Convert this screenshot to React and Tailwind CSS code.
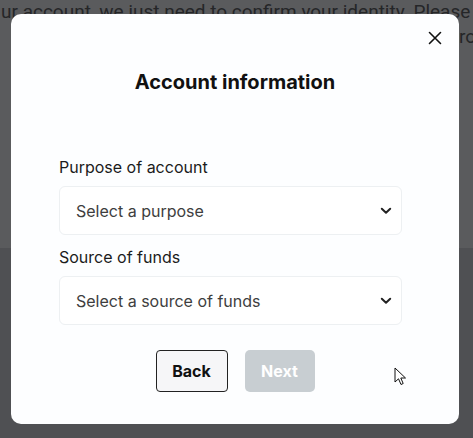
import React from "react";

function Chevron() {
  return (
    <svg width="12" height="8" viewBox="0 0 12 8" fill="none" className="shrink-0">
      <path d="M1.8 1.8 L6 5.8 L10.2 1.8" stroke="#222" strokeWidth="2" strokeLinecap="round" strokeLinejoin="round" />
    </svg>
  );
}

function Field({ label, placeholder }) {
  return (
    <div className="flex flex-col gap-[8px]">
      <div className="text-[16px] leading-[22px] text-[#1b1b1b]">{label}</div>
      <div className="h-[49px] rounded-[6px] border border-[#edf0f2] bg-white flex items-center justify-between pl-[16px] pr-[9px]">
        <span className="text-[16px] leading-[22px] text-[#3e3e3e]">{placeholder}</span>
        <Chevron />
      </div>
    </div>
  );
}

export default function App() {
  return (
    <div className="relative w-[473px] h-[438px] overflow-hidden" style={{ fontFamily: "Inter, 'Noto Sans', sans-serif" }}>
      <div className="h-[248px] bg-[#5a5b5d] overflow-hidden" style={{ fontFamily: "Roboto, 'Liberation Sans', sans-serif" }}>
        <div className="whitespace-nowrap text-[19px] leading-[25px] text-[#252628] -mt-[1px] pl-[1px]">ur account, we just need to confirm your identity. Please</div>
        <div className="w-[473px] overflow-hidden whitespace-nowrap text-[19px] leading-[25px] text-[#252628] pl-[459px]">ro</div>
      </div>
      <div className="h-[190px] bg-[#4f5053]"></div>

      <div className="absolute left-[11px] top-[14px] w-[448px] h-[410px] rounded-[10px] bg-[#fdfeff]">
        <button className="absolute right-[16px] top-[16px] w-[16px] h-[16px] flex items-center justify-center">
          <svg width="14" height="14" viewBox="0 0 14 14" fill="none">
            <path d="M1.5 1.5 L12.5 12.5 M12.5 1.5 L1.5 12.5" stroke="#111" strokeWidth="1.6" strokeLinecap="round" />
          </svg>
        </button>
        <div className="pt-[54px] text-center text-[20px] leading-[28px] font-bold text-[#111]">Account information</div>
        <div className="mt-[60px] pl-[48px] pr-[57px] flex flex-col gap-[11px]">
          <Field label="Purpose of account" placeholder="Select a purpose" />
          <Field label="Source of funds" placeholder="Select a source of funds" />
        </div>
        <div className="mt-[25px] flex justify-center gap-[17px]">
          <button className="w-[72px] h-[42px] rounded-[4px] border border-[#222] bg-[#f6f6f8] text-[16px] font-bold text-[#111]">Back</button>
          <button className="w-[70px] h-[42px] rounded-[5px] bg-[#c8ced2] text-[16px] font-bold text-white">Next</button>
        </div>
      </div>

      <svg className="absolute left-[394px] top-[367px]" width="13" height="19" viewBox="0 0 13 19" fill="none">
        <path d="M1 1 L1 15 L4.5 11.8 L7 17.5 L9.2 16.5 L6.8 11 L11.5 11 Z" fill="white" stroke="#111" strokeWidth="1" strokeLinejoin="round" />
      </svg>
    </div>
  );
}
